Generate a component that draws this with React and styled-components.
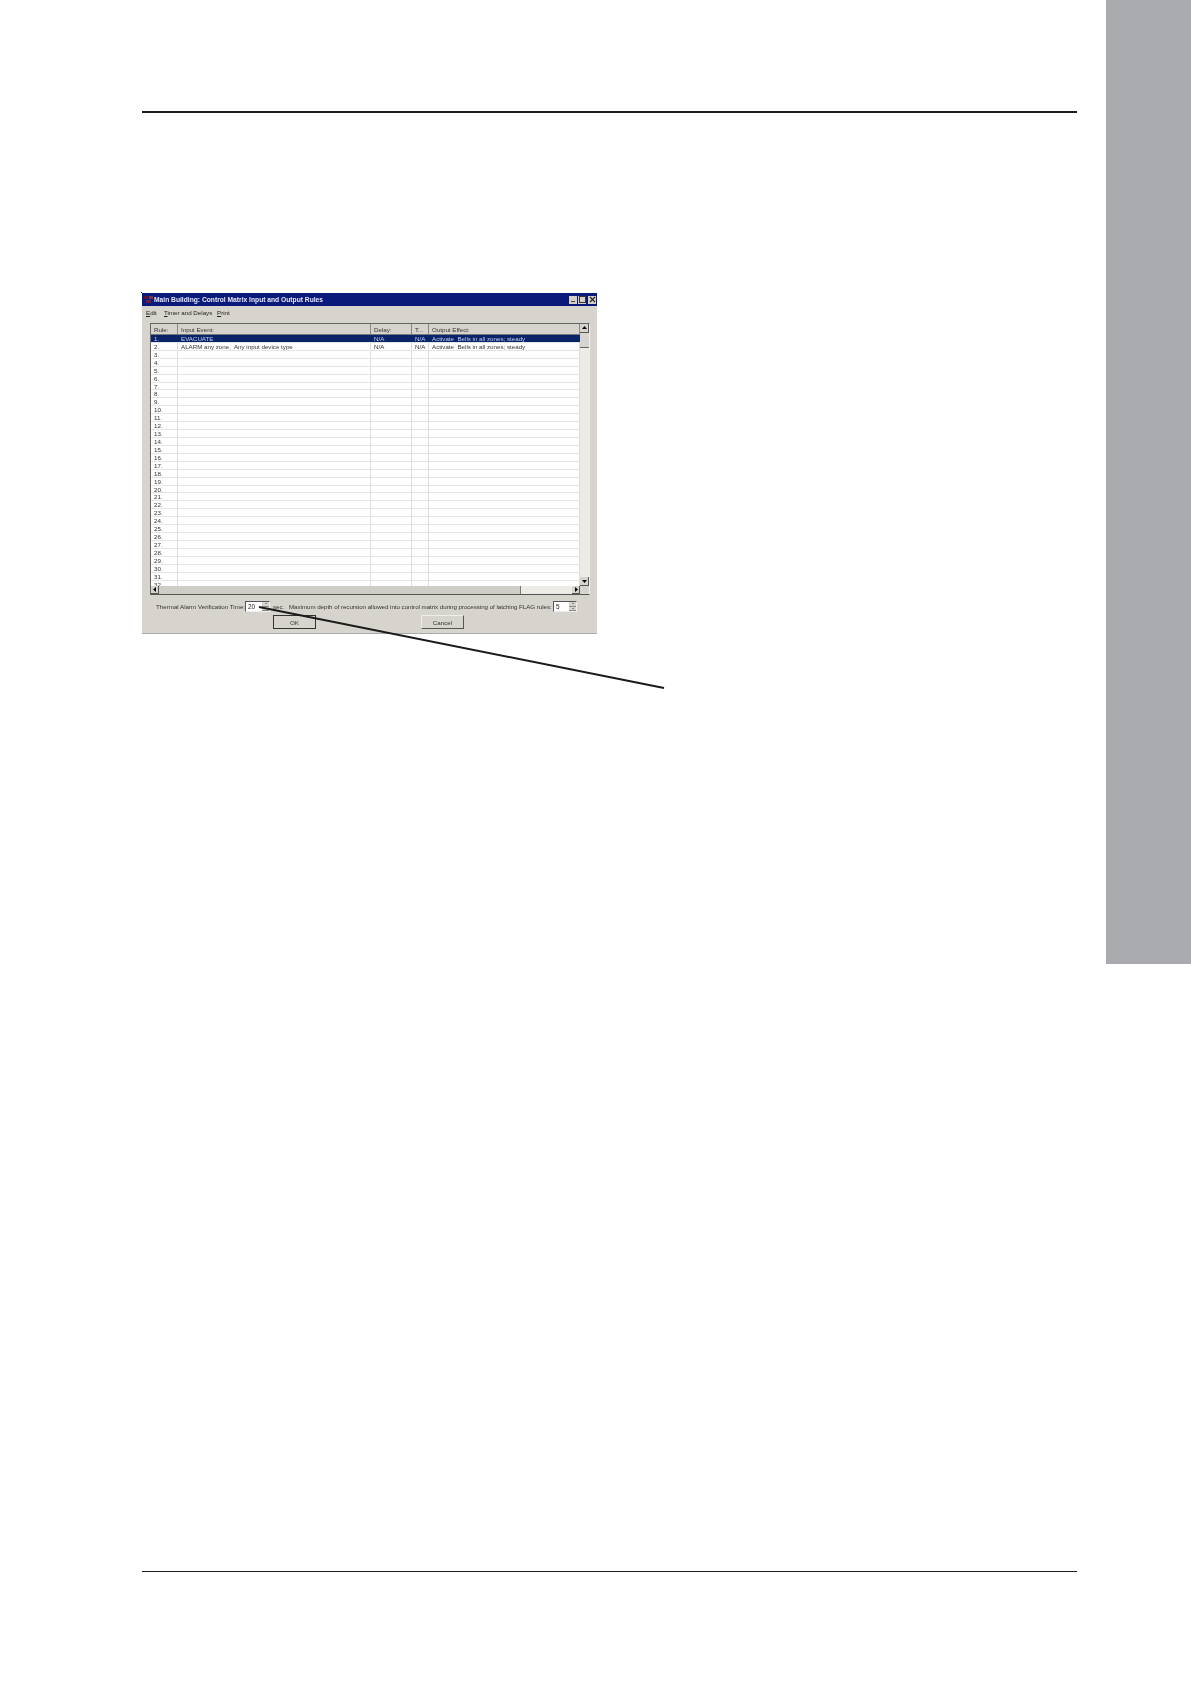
import React from "react";
import styled, { createGlobalStyle } from "styled-components";

const Global = createGlobalStyle`
	html, body { margin: 0; padding: 0; background: #fff; }
	body { font-family: "Liberation Sans", Arial, sans-serif; }
`;

const COLUMNS = "27px 193px 41px 17px 1fr";
const ROW_COUNT = 33;

const rowData = {
	1: { input: "EVACUATE", delay: "N/A", t: "N/A", output: "Activate  Bells in all zones; steady" },
	2: { input: "ALARM any zone,  Any input device type", delay: "N/A", t: "N/A", output: "Activate  Bells in all zones; steady" },
};

const App = () => {
	const rows = Array.from({ length: ROW_COUNT }, (_, i) => i + 1);
	return (
		<Page>
			<Global />
			<Content>
				<TopRule />
				<Window>
					<Speck />
					<TitleBar>
						<TitleLeft>
							<svg width="9" height="7" viewBox="0 0 9 7">
								<rect x="0" y="0" width="4" height="3" fill="#5a1030" />
								<rect x="5" y="0" width="4" height="3" fill="#7a3040" />
								<rect x="2" y="4" width="5" height="3" fill="#6a2038" />
							</svg>
							<Title>Main Building: Control Matrix Input and Output Rules</Title>
						</TitleLeft>
						<TitleButtons>
							<TitleButton>
								<svg width="7" height="7" viewBox="0 0 7 7"><rect x="1" y="5" width="4" height="1" fill="#444" /></svg>
							</TitleButton>
							<TitleButton>
								<svg width="7" height="7" viewBox="0 0 7 7"><rect x="0.5" y="0.5" width="6" height="6" fill="none" stroke="#333" /></svg>
							</TitleButton>
							<CloseButton>
								<svg width="7" height="7" viewBox="0 0 7 7"><path d="M1 1L6 6M6 1L1 6" stroke="#222" strokeWidth="1.1" /></svg>
							</CloseButton>
						</TitleButtons>
					</TitleBar>
					<MenuBar>
						<MenuItem $width={18}><u>E</u>dit</MenuItem>
						<MenuItem $width={53}><u>T</u>imer and Delays</MenuItem>
						<MenuItem $width={14}><u>P</u>rint</MenuItem>
					</MenuBar>
					<ListFrame>
						<ListMain>
							<HeaderRow>
								<HeaderCell>Rule:</HeaderCell>
								<HeaderCell>Input Event:</HeaderCell>
								<HeaderCell>Delay:</HeaderCell>
								<HeaderCell>T...</HeaderCell>
								<HeaderCell>Output Effect:</HeaderCell>
							</HeaderRow>
							<RowArea>
								{rows.map((n) => {
									const d = rowData[n] || {};
									return (
										<Row key={n} $selected={n === 1}>
											<Cell $selected={n === 1}>{n}.</Cell>
											<Cell $selected={n === 1}>{d.input}</Cell>
											<Cell $selected={n === 1}>{d.delay}</Cell>
											<Cell $selected={n === 1}>{d.t}</Cell>
											<Cell $selected={n === 1}>{d.output}</Cell>
										</Row>
									);
								})}
							</RowArea>
							<HScroll>
								<ArrowButton>
									<svg width="4" height="5" viewBox="0 0 4 5"><path d="M3 0L0 2.5L3 5Z" fill="#000" /></svg>
								</ArrowButton>
								<HThumb />
								<ArrowButton>
									<svg width="4" height="5" viewBox="0 0 4 5"><path d="M1 0L4 2.5L1 5Z" fill="#000" /></svg>
								</ArrowButton>
							</HScroll>
						</ListMain>
						<VScroll>
							<VArrow>
								<svg width="5" height="4" viewBox="0 0 5 4"><path d="M0 3L2.5 0L5 3Z" fill="#000" /></svg>
							</VArrow>
							<VThumb />
							<VArrow>
								<svg width="5" height="4" viewBox="0 0 5 4"><path d="M0 1L2.5 4L5 1Z" fill="#000" /></svg>
							</VArrow>
							<Corner />
						</VScroll>
					</ListFrame>
					<OptionsRow>
						<OptionText $width={89}>Thermal Alarm Verification Time:</OptionText>
						<Spin $width={25}>
							<SpinValue>20</SpinValue>
							<SpinArrows><SpinPart $up /><SpinPart /></SpinArrows>
						</Spin>
						<SecText $width={19}>sec.</SecText>
						<LongText $width={264}>Maximum depth of recursion allowed into control matrix during processing of latching FLAG rules:</LongText>
						<Spin $width={24}>
							<SpinValue>5</SpinValue>
							<SpinArrows><SpinPart $up /><SpinPart /></SpinArrows>
						</Spin>
					</OptionsRow>
					<ButtonRow>
						<Button $default>OK</Button>
						<Button>Cancel</Button>
					</ButtonRow>
				</Window>
				<BottomRule />
				<Pointer width="420" height="90" viewBox="0 0 420 90">
					<line x1="1" y1="1" x2="406" y2="82" stroke="#1a1a1a" strokeWidth="1.9" />
				</Pointer>
			</Content>
			<SideTab />
		</Page>
	);
};

export default App;

const Page = styled.div`
	display: grid;
	grid-template-columns: 142px 935px 1fr 85px;
	width: 1191px;
	height: 1684px;
	overflow: hidden;
	background: #fff;
`;

const Content = styled.div`
	grid-column: 2;
	position: relative;
	display: flex;
	flex-direction: column;
	padding-top: 111px;
`;

const SideTab = styled.div`
	grid-column: 4;
	height: 964px;
	background: #a9aaad;
`;

const TopRule = styled.div`
	height: 2px;
	background: #1d1d1b;
`;

const BottomRule = styled.div`
	height: 1px;
	margin-top: 937px;
	background: #1d1d1b;
`;

const Window = styled.div`
	position: relative;
	box-sizing: border-box;
	width: 455px;
	height: 341px;
	margin-top: 180px;
	display: flex;
	flex-direction: column;
	background: #d6d4cc;
	border-bottom: 1px solid #aaa;
	filter: blur(0.4px);
`;

const Speck = styled.div`
	position: absolute;
	left: -1px;
	top: -1px;
	width: 1px;
	height: 1px;
	background: #222;
`;

const TitleBar = styled.div`
	height: 13px;
	display: flex;
	align-items: center;
	justify-content: space-between;
	padding: 0 1px 0 2px;
	background: #0a1a7a;
`;

const TitleLeft = styled.div`
	display: flex;
	align-items: center;
	gap: 1px;
`;

const Title = styled.span`
	font-size: 6.7px;
	font-weight: 700;
	color: #e8e8f4;
	white-space: nowrap;
`;

const TitleButtons = styled.div`
	display: flex;
	gap: 1px;
`;

const TitleButton = styled.div`
	width: 8px;
	height: 8px;
	display: flex;
	align-items: center;
	justify-content: center;
	background: #d4d0c8;
`;

const CloseButton = styled(TitleButton)`
	margin-left: 1px;
`;

const MenuBar = styled.div`
	height: 12px;
	margin-bottom: 5px;
	display: flex;
	align-items: center;
	padding-left: 4px;
`;

const MenuItem = styled.span`
	width: ${(p) => p.$width}px;
	font-size: 6.2px;
	color: #222;
	white-space: nowrap;
`;

const ListFrame = styled.div`
	box-sizing: border-box;
	width: 440px;
	height: 272px;
	margin-left: 8px;
	display: flex;
	border: 1px solid #666;
	border-right-color: #eee;
	border-bottom-color: #555;
	background: #fff;
`;

const ListMain = styled.div`
	flex: 1;
	min-width: 0;
	display: flex;
	flex-direction: column;
`;

const HeaderRow = styled.div`
	height: 10px;
	flex: none;
	display: grid;
	grid-template-columns: ${COLUMNS};
	background: #d6d4cc;
	border-bottom: 1px solid #777;
`;

const HeaderCell = styled.div`
	display: flex;
	align-items: center;
	padding-left: 3px;
	font-size: 6.2px;
	color: #333;
	white-space: nowrap;
	border-right: 1px solid #888;
`;

const RowArea = styled.div`
	flex: 1;
	min-height: 0;
	overflow: hidden;
`;

const Row = styled.div`
	box-sizing: border-box;
	height: 7.93px;
	display: grid;
	grid-template-columns: ${COLUMNS};
	background: ${(p) => (p.$selected ? "#0a246a" : "#fff")};
	border-bottom: 1px solid #e4e4e1;
`;

const Cell = styled.div`
	padding-left: 3px;
	font-size: 6.2px;
	line-height: 7px;
	color: ${(p) => (p.$selected ? "#c4cfee" : "#333")};
	white-space: pre;
	border-right: 1px solid ${(p) => (p.$selected ? "#0a246a" : "#dcdcd8")};
`;

const HScroll = styled.div`
	height: 8px;
	flex: none;
	display: flex;
	background: #ecebe6;
`;

const ArrowButton = styled.div`
	box-sizing: border-box;
	width: 8px;
	height: 8px;
	display: flex;
	align-items: center;
	justify-content: center;
	background: #d6d4cc;
	border-right: 1px solid #555;
	border-bottom: 1px solid #555;
`;

const HThumb = styled.div`
	width: 361px;
	background: #cfcec6;
	border-right: 1px solid #777;
	margin-right: auto;
`;

const VScroll = styled.div`
	width: 9px;
	flex: none;
	display: flex;
	flex-direction: column;
	background: #ecebe6;
`;

const VArrow = styled.div`
	box-sizing: border-box;
	height: 9px;
	display: flex;
	align-items: center;
	justify-content: center;
	background: #d6d4cc;
	border-right: 1px solid #555;
	border-bottom: 1px solid #555;
`;

const VThumb = styled.div`
	height: 14px;
	background: #d6d4cc;
	border-bottom: 1px solid #666;
	margin-bottom: auto;
`;

const Corner = styled.div`
	height: 8px;
	background: #d6d4cc;
`;

const OptionsRow = styled.div`
	height: 11px;
	margin-top: 6px;
	padding-left: 14px;
	display: flex;
	align-items: center;
`;

const OptionText = styled.span`
	box-sizing: border-box;
	width: ${(p) => p.$width}px;
	flex: none;
	font-size: 6.2px;
	color: #333;
	white-space: nowrap;
`;

const SecText = styled(OptionText)`
	padding-left: 3px;
`;

const LongText = styled(OptionText)`
	letter-spacing: -0.04px;
`;

const Spin = styled.div`
	box-sizing: border-box;
	flex: none;
	width: ${(p) => p.$width}px;
	height: 11px;
	display: flex;
	justify-content: space-between;
	background: #fff;
	border: 1px solid #555;
	border-right-color: #eee;
	border-bottom-color: #eee;
`;

const SpinValue = styled.span`
	padding-left: 2px;
	font-size: 6.4px;
	line-height: 9px;
	color: #222;
`;

const SpinArrows = styled.div`
	width: 7px;
	display: flex;
	flex-direction: column;
`;

const SpinPart = styled.div`
	flex: 1;
	display: flex;
	align-items: center;
	justify-content: center;
	background: #d6d4cc;
	border-bottom: 1px solid #888;

	&::before {
		content: "";
		border-left: 1.5px solid transparent;
		border-right: 1.5px solid transparent;
		${(p) => (p.$up ? "border-bottom: 1.5px solid #333;" : "border-top: 1.5px solid #333;")}
	}
`;

const ButtonRow = styled.div`
	margin-top: 3px;
	padding-left: 131px;
	display: flex;
	gap: 105px;
`;

const Button = styled.div`
	box-sizing: border-box;
	width: 43px;
	height: 14px;
	display: flex;
	align-items: center;
	justify-content: center;
	font-size: 6.2px;
	color: #333;
	background: #d6d4cc;
	border: ${(p) => (p.$default ? "1.5px solid #333" : "1px solid #eee")};
	border-right-color: ${(p) => (p.$default ? "#333" : "#555")};
	border-bottom-color: ${(p) => (p.$default ? "#333" : "#555")};
`;

const Pointer = styled.svg`
	position: absolute;
	left: 116px;
	top: 606px;
`;
